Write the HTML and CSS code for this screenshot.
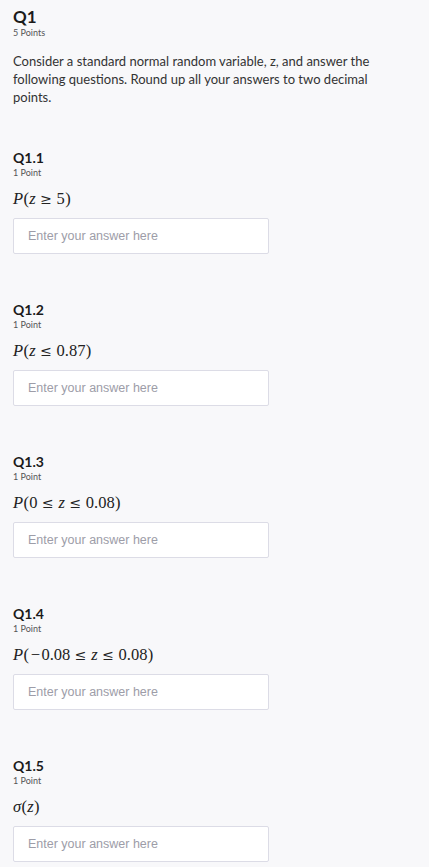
FILE: index.html
```html
<!DOCTYPE html>
<html lang="en">
<head>
<meta charset="utf-8">
<title>Q1</title>
<link rel="stylesheet" href="styles.css">
</head>
<body>
<main class="page">
  <header class="question-head">
    <h1 class="q-title">Q1</h1>
    <div class="q-points">5 Points</div>
    <p class="q-intro">Consider a standard normal random variable, z, and answer the following questions. Round up all your answers to two decimal points.</p>
  </header>
  <div class="parts">
    <section class="part">
      <h2 class="part-title">Q1.1</h2>
      <div class="part-points">1 Point</div>
      <div class="math"><i class="mi">P</i><span class="mp">(</span><i class="mi">z</i><span class="mo">≥</span>5<span class="mp">)</span></div>
      <input class="answer" type="text" placeholder="Enter your answer here">
    </section>
    <section class="part">
      <h2 class="part-title">Q1.2</h2>
      <div class="part-points">1 Point</div>
      <div class="math"><i class="mi">P</i><span class="mp">(</span><i class="mi">z</i><span class="mo">≤</span>0.87<span class="mp">)</span></div>
      <input class="answer" type="text" placeholder="Enter your answer here">
    </section>
    <section class="part">
      <h2 class="part-title">Q1.3</h2>
      <div class="part-points">1 Point</div>
      <div class="math"><i class="mi">P</i><span class="mp">(</span>0<span class="mo">≤</span><i class="mi">z</i><span class="mo">≤</span>0.08<span class="mp">)</span></div>
      <input class="answer" type="text" placeholder="Enter your answer here">
    </section>
    <section class="part">
      <h2 class="part-title">Q1.4</h2>
      <div class="part-points">1 Point</div>
      <div class="math"><i class="mi">P</i><span class="mp">(</span><span class="mminus">−</span>0.08<span class="mo">≤</span><i class="mi">z</i><span class="mo">≤</span>0.08<span class="mp">)</span></div>
      <input class="answer" type="text" placeholder="Enter your answer here">
    </section>
    <section class="part">
      <h2 class="part-title">Q1.5</h2>
      <div class="part-points">1 Point</div>
      <div class="math"><i class="mi">σ</i><span class="mp">(</span><i class="mi">z</i><span class="mp">)</span></div>
      <input class="answer" type="text" placeholder="Enter your answer here">
    </section>
  </div>
</main>
</body>
</html>
```
FILE: styles.css
```css
html, body {
  margin: 0;
  padding: 0;
  background: #f8f8fa;
}
body {
  font-family: Lato, "Open Sans", sans-serif;
  color: #2b2b2b;
}
.page {
  padding: 7px 13px 0 13px;
}
.q-title {
  margin: 0;
  font-size: 17px;
  line-height: 20px;
  font-weight: 700;
  color: #1b1b1b;
}
.q-points {
  font-size: 9px;
  line-height: 12px;
  color: #555;
}
.q-intro {
  margin: 13px 0 0 0;
  font-size: 13px;
  line-height: 18px;
  color: #333;
  max-width: 380px;
}
.parts {
  display: flex;
  flex-direction: column;
  gap: 47px;
  margin-top: 43px;
}
.part {
  display: flex;
  flex-direction: column;
  align-items: flex-start;
}
.part-title {
  margin: 0;
  font-size: 14px;
  line-height: 18px;
  font-weight: 700;
  color: #1b1b1b;
}
.part-points {
  font-size: 9px;
  line-height: 12px;
  color: #555;
}
.math {
  margin-top: 9px;
  font-family: "Liberation Serif", "Times New Roman", serif;
  font-size: 16.5px;
  line-height: 22px;
  color: #222;
  white-space: nowrap;
}
.mi {
  font-style: italic;
}
.mp {
  display: inline-block;
  width: 6.1px;
  text-align: center;
}
.mo {
  display: inline-block;
  width: 12.2px;
  margin: 0 4.4px;
  text-align: center;
  font-family: "DejaVu Serif", serif;
  font-size: 14px;
  font-weight: 300;
}
.mminus {
  display: inline-block;
  width: 12.2px;
  text-align: center;
}
.answer {
  margin-top: 8px;
  box-sizing: border-box;
  width: 256px;
  height: 36px;
  padding: 0 14px;
  background: #fff;
  border: 1px solid #dcdce6;
  border-radius: 2px;
  font-family: "Liberation Sans", Arial, sans-serif;
  font-size: 12.5px;
  color: #333;
  outline: none;
}
.answer::placeholder {
  color: #9d9da8;
}
```
